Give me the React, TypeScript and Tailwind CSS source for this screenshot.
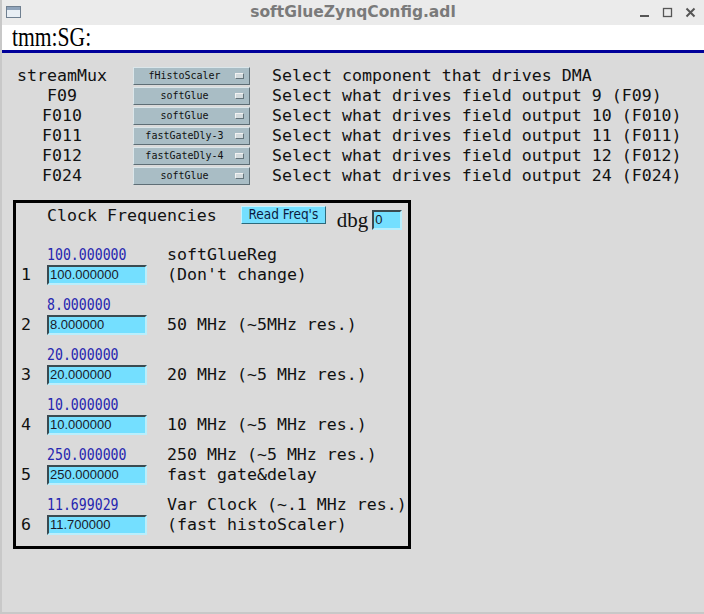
import React from 'react';

const mono = "font-['DejaVu_Sans_Mono',monospace]";

const muxRows = [
  { label: 'streamMux', value: 'fHistoScaler', desc: 'Select component that drives DMA' },
  { label: 'F09', value: 'softGlue', desc: 'Select what drives field output 9 (F09)' },
  { label: 'F010', value: 'softGlue', desc: 'Select what drives field output 10 (F010)' },
  { label: 'F011', value: 'fastGateDly-3', desc: 'Select what drives field output 11 (F011)' },
  { label: 'F012', value: 'fastGateDly-4', desc: 'Select what drives field output 12 (F012)' },
  { label: 'F024', value: 'softGlue', desc: 'Select what drives field output 24 (F024)' },
];

const clocks = [
  { rb: '100.000000', set: '100.000000', top: 'softGlueReg', bottom: "(Don't change)" },
  { rb: '8.000000', set: '8.000000', top: '', bottom: '50 MHz (~5MHz res.)' },
  { rb: '20.000000', set: '20.000000', top: '', bottom: '20 MHz (~5 MHz res.)' },
  { rb: '10.000000', set: '10.000000', top: '', bottom: '10 MHz (~5 MHz res.)' },
  { rb: '250.000000', set: '250.000000', top: '250 MHz (~5 MHz res.)', bottom: 'fast gate&delay' },
  { rb: '11.699029', set: '11.700000', top: 'Var Clock (~.1 MHz res.)', bottom: '(fast histoScaler)' },
];

const MenuButton: React.FC<{ value: string }> = ({ value }) => (
  <div className="flex h-[18px] w-[117px] items-center border border-t-[#dbe6ea] border-l-[#dbe6ea] border-b-[#5e6e76] border-r-[#5e6e76] bg-[#a9bdc5]">
    <span className={`flex-1 text-center text-[10px] leading-none text-[#111] ${mono}`}>{value}</span>
    <span className="mr-[5px] h-[6px] w-[9px] border border-t-[#f2f2f2] border-l-[#f2f2f2] border-b-[#65757c] border-r-[#65757c] bg-[#d3dbde]" />
  </div>
);

const Field: React.FC<{ value: string; w: string }> = ({ value, w }) => (
  <div className={`flex h-[20px] ${w} items-center border-2 border-t-[#3a4a50] border-l-[#3a4a50] border-b-[#b9eefc] border-r-[#b9eefc] bg-[#74dfff] pl-[1px] font-['Liberation_Sans',sans-serif] text-[13px] text-[#1a1a2a]`}>
    {value}
  </div>
);

export default function App() {
  return (
    <div className="flex h-[614px] w-[704px] flex-col overflow-hidden border-l-2 border-b-2 border-[#c8c8c8] bg-[#dadada]">
      {/* title bar */}
      <div className="relative flex h-[25px] shrink-0 items-center justify-center bg-[#ebebeb]">
        <svg className="absolute left-[4px] top-[6px]" width="15" height="12" viewBox="0 0 15 12">
          <rect x="0.5" y="0.5" width="14" height="11" fill="#e8eef4" stroke="#6f7f90" />
          <rect x="1" y="1" width="13" height="3" fill="#8fa3ba" />
        </svg>
        <span className="font-['DejaVu_Sans',sans-serif] text-[15.5px] font-bold text-[#7a7a7a]">softGlueZynqConfig.adl</span>
        <div className="absolute right-[8px] top-[7px] flex items-center gap-[12px]">
          <svg width="11" height="11" viewBox="0 0 11 11">
            <rect x="1" y="8" width="9" height="2" fill="#555" />
          </svg>
          <svg width="11" height="11" viewBox="0 0 11 11">
            <rect x="1.5" y="1.5" width="8" height="8" fill="none" stroke="#555" strokeWidth="1.3" />
          </svg>
          <svg width="11" height="11" viewBox="0 0 11 11">
            <path d="M1.5 1.5 L9.5 9.5 M9.5 1.5 L1.5 9.5" stroke="#555" strokeWidth="2" />
          </svg>
        </div>
      </div>

      {/* PV prefix banner */}
      <div className="flex h-[25px] shrink-0 items-center bg-white pl-[10px]">
        <span className="origin-left scale-x-[0.8] font-['Liberation_Serif',serif] text-[27px] leading-none text-black">tmm:SG:</span>
      </div>
      <div className="h-[3px] shrink-0 bg-[#00009a]" />

      {/* mux selectors */}
      <div className="mt-[13px] flex flex-col">
        {muxRows.map((r) => (
          <div key={r.label} className="flex h-[20px] items-center">
            <div className={`ml-[10px] w-[100px] shrink-0 text-center text-[16.6px] leading-none text-[#111] ${mono}`}>{r.label}</div>
            <div className="ml-[21px]">
              <MenuButton value={r.value} />
            </div>
            <div className={`ml-[22px] whitespace-nowrap text-[16.6px] leading-none text-[#111] ${mono}`}>{r.desc}</div>
          </div>
        ))}
      </div>

      {/* clock frequencies */}
      <div className="ml-[11px] mt-[14px] h-[349px] w-[398px] border-[3px] border-black">
        <div className="flex h-[30px] items-start pt-[3px]">
          <span className={`ml-[31px] text-[16.6px] leading-[20px] text-[#111] ${mono}`}>Clock Frequencies</span>
          <div className="ml-[24px] flex h-[18px] w-[85px] items-center justify-center border border-t-[#c4f2ff] border-l-[#c4f2ff] border-b-[#2c6a7c] border-r-[#2c6a7c] bg-[#74dfff] font-['DejaVu_Sans_Condensed',sans-serif] text-[13.5px] leading-none text-[#0c1a40]">
            Read Freq's
          </div>
          <span className="ml-[11px] mt-[4px] font-['Liberation_Serif',serif] text-[21px] leading-none text-[#111]">dbg</span>
          <div className="ml-[4px] mt-[4px]">
            <Field value="0" w="w-[30px]" />
          </div>
        </div>

        <div className="mt-[12px] flex flex-col gap-[10px]">
          {clocks.map((c, i) => (
            <div key={i} className="flex flex-col">
              <div className="flex h-[20px] items-center">
                <span className={`ml-[31px] w-[120px] origin-left scale-x-[0.88] text-[15px] leading-none text-[#2626b0] ${mono}`}>{c.rb}</span>
                <span className={`whitespace-nowrap text-[16.6px] leading-none text-[#111] ${mono}`}>{c.top}</span>
              </div>
              <div className="flex h-[20px] items-center">
                <span className={`ml-[5px] w-[26px] text-[16.6px] leading-none text-[#111] ${mono}`}>{i + 1}</span>
                <Field value={c.set} w="w-[100px]" />
                <span className={`ml-[20px] whitespace-nowrap text-[16.6px] leading-none text-[#111] ${mono}`}>{c.bottom}</span>
              </div>
            </div>
          ))}
        </div>
      </div>
    </div>
  );
}
